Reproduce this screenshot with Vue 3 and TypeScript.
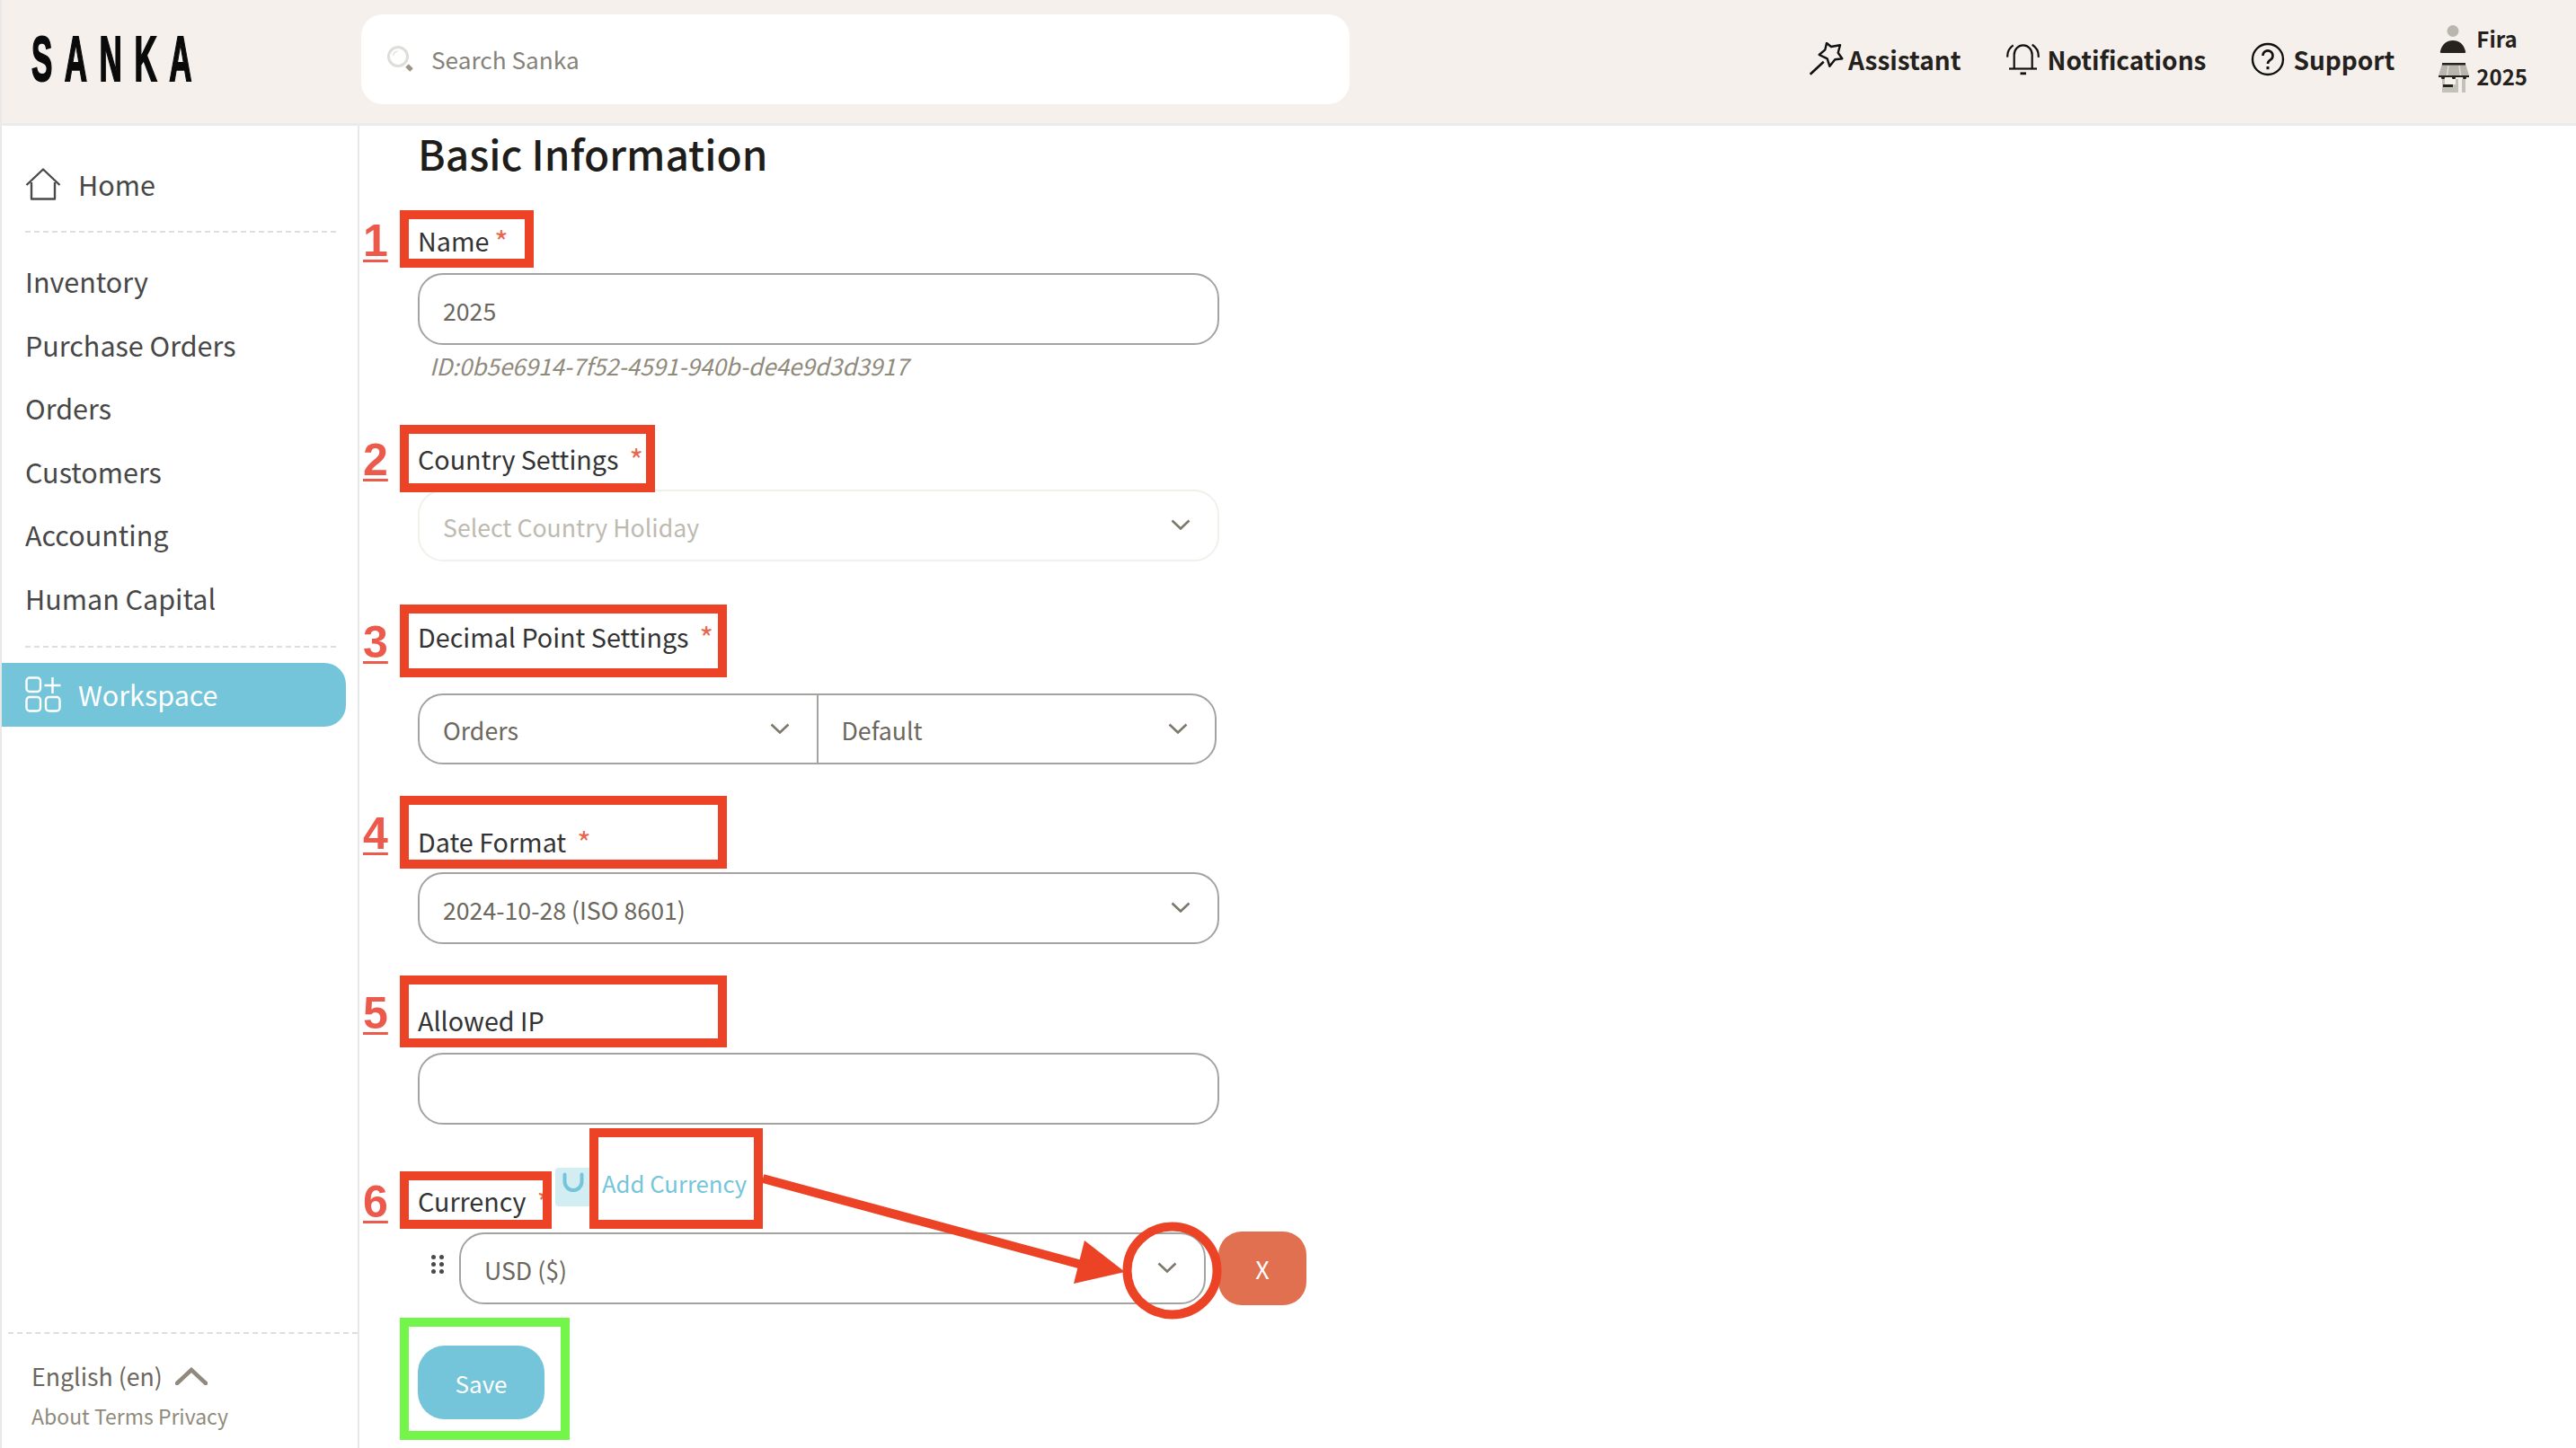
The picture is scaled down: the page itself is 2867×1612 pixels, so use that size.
<script setup lang="ts">
const navItems: string[] = ['Inventory', 'Purchase Orders', 'Orders', 'Customers', 'Accounting', 'Human Capital']
interface Box { n: string; nx: number; ny: number; x: number; y: number; w: number; h: number }
const marks: Box[] = [
  { n: '1', nx: 404, ny: 240, x: 445, y: 234, w: 149, h: 64 },
  { n: '2', nx: 404, ny: 484, x: 445, y: 473, w: 284, h: 75 },
  { n: '3', nx: 404, ny: 687, x: 445, y: 673, w: 364, h: 81 },
  { n: '4', nx: 404, ny: 900, x: 445, y: 886, w: 364, h: 81 },
  { n: '5', nx: 404, ny: 1100, x: 445, y: 1086, w: 364, h: 80 },
  { n: '6', nx: 404, ny: 1310, x: 445, y: 1304, w: 169, h: 64 }
]
function pos(x: number, y: number, w?: number, h?: number) {
  return { left: x + 'px', top: y + 'px', width: w ? w + 'px' : undefined, height: h ? h + 'px' : undefined }
}
</script>

<template>
  <div class="page">
    <header class="topbar">
      <div class="logo-wrap"><div class="logo">SANKA</div></div>
      <div class="search">
        <svg class="search-ico" viewBox="0 0 30 30" width="30" height="30">
          <circle cx="12" cy="12" r="10.500" fill="none" stroke="#dfddd8" stroke-width="3" />
          <path d="M6.500 11a6 6 0 0 1 5-5" fill="none" stroke="#e4e2dd" stroke-width="1.500" />
          <path d="M22 22l5 5" stroke="#9c9587" stroke-width="5" />
        </svg>
        <span>Search Sanka</span>
      </div>
      <nav class="actions">
        <div class="act act-a">
          <svg viewBox="0 0 38 38" width="38" height="38" fill="none" stroke="#111" stroke-width="2.400">
            <path d="M19 1l5 4 10-1.700-2.300 8.400 4.600 6.600-8 1-6 7.400-2.600-8.400-9-4.300 6.600-5.700z" stroke-linejoin="round" />
            <path d="M15.700 21.700L.7 35.700" stroke-width="2.600" />
          </svg>
          <span>Assistant</span>
        </div>
        <div class="act act-n">
          <svg viewBox="0 0 38 38" width="38" height="38" fill="none" stroke="#111" stroke-width="2.200">
            <path d="M9.700 29.500V14a10 10.700 0 0 1 20 0v15.500" />
            <path d="M4 29.500h31" />
            <path d="M16.500 34.800h6.500" stroke-width="2.800" />
            <path d="M8.700 3.300C4 6.500 1.800 11 2.300 16.700M29.700 2.800c5 3.200 7.500 8 7 14" />
          </svg>
          <span>Notifications</span>
        </div>
        <div class="act act-s">
          <svg viewBox="0 0 38 38" width="38" height="38" fill="none" stroke="#111" stroke-width="2.400">
            <circle cx="19" cy="19" r="17" />
            <path d="M13.500 15a5.500 5.500 0 1 1 8.300 4.700c-1.800 1.100-2.800 2-2.800 4.300" stroke-width="2.600" />
            <path d="M19 27v3.200" stroke-width="3" />
          </svg>
          <span>Support</span>
        </div>
        <div class="who">
          <div class="who-row">
            <svg viewBox="0 0 34 33" width="34" height="33">
              <circle cx="16" cy="6.500" r="6.500" fill="#b9b6ae" />
              <path d="M3 31c-1 0-1.500-.8-1-2 2-8 7-12 14-12s12 4 14 12c.5 1.200 0 2-1 2z" fill="#26231f" />
            </svg>
            <span>Fira</span>
          </div>
          <div class="who-row">
            <svg viewBox="0 0 34 33" width="34" height="33">
              <path d="M4 1L0 14h34L30 1z" fill="#b9b6ae" />
              <path d="M11 3L9.500 14M23 3l1.500 11" stroke="#e4e1da" stroke-width="1.500" />
              <path d="M4 0h26v2.500H4zM0 14h34v2H0z" fill="#26231f" />
              <circle cx="5" cy="16.500" r="2" fill="#26231f" />
              <circle cx="17" cy="16.500" r="2" fill="#26231f" />
              <circle cx="29" cy="16.500" r="2" fill="#26231f" />
              <path d="M4 18h18v15H4zM26 18h4v15h-4z" fill="#c4c1b8" />
              <path d="M7 18h12v6H7z" fill="#f5f0eb" />
              <path d="M5 24h11v3H5z" fill="#26231f" />
            </svg>
            <span>2025</span>
          </div>
        </div>
      </nav>
    </header>

    <div class="body">
      <aside class="side">
        <div class="home">
          <svg viewBox="0 0 40 36" width="40" height="36" fill="none" stroke="#4a4a4a" stroke-width="2.400">
            <path d="M1.500 19L20 1.500 38.500 19M7 16v18.500h26V16" stroke-linejoin="round" />
          </svg>
          <span>Home</span>
        </div>
        <div class="dash dash-a"></div>
        <ul class="nav">
          <li v-for="item in navItems" :key="item">{{ item }}</li>
        </ul>
        <div class="dash dash-b"></div>
        <div class="work">
          <svg viewBox="0 0 40 40" width="40" height="40" fill="none" stroke="#fff" stroke-width="2.400">
            <rect x="1.500" y="1.500" width="15.500" height="15.500" rx="3.500" />
            <rect x="1.500" y="23" width="15.500" height="15.500" rx="3.500" />
            <rect x="23" y="23" width="15.500" height="15.500" rx="3.500" />
            <path d="M30.500 1v18M21.500 10h18" />
          </svg>
          <span>Workspace</span>
        </div>
        <div class="side-foot">
          <div class="dash dash-c"></div>
          <div class="lang">
            <span>English (en)</span>
            <svg viewBox="0 0 36 20" width="36" height="20" fill="none" stroke="#8f8a7c" stroke-width="4.500" stroke-linecap="round">
              <path d="M2 18L18 3l16 15" />
            </svg>
          </div>
          <div class="legal">About Terms Privacy</div>
        </div>
      </aside>

      <main class="main">
        <h1>Basic Information</h1>

        <section class="field f-name">
          <label>Name<i class="req">*</i></label>
          <div class="ctl">2025</div>
          <p class="uid">ID:0b5e6914-7f52-4591-940b-de4e9d3d3917</p>
        </section>

        <section class="field f-country">
          <label>Country Settings<i class="req wide">*</i></label>
          <div class="ctl pale">
            <span>Select Country Holiday</span>
            <svg class="chev" viewBox="0 0 22 12" width="22" height="12"><path d="M1.500 1.500L11 10.500l9.500-9" /></svg>
          </div>
        </section>

        <section class="field f-decimal">
          <label>Decimal Point Settings<i class="req wide">*</i></label>
          <div class="pair">
            <div class="cell">
              <span>Orders</span>
              <svg class="chev" viewBox="0 0 22 12" width="22" height="12"><path d="M1.500 1.500L11 10.500l9.500-9" /></svg>
            </div>
            <div class="cell">
              <span>Default</span>
              <svg class="chev" viewBox="0 0 22 12" width="22" height="12"><path d="M1.500 1.500L11 10.500l9.500-9" /></svg>
            </div>
          </div>
        </section>

        <section class="field f-date">
          <label>Date Format<i class="req wide">*</i></label>
          <div class="ctl">
            <span>2024-10-28 (ISO 8601)</span>
            <svg class="chev" viewBox="0 0 22 12" width="22" height="12"><path d="M1.500 1.500L11 10.500l9.500-9" /></svg>
          </div>
        </section>

        <section class="field f-ip">
          <label>Allowed IP</label>
          <div class="ctl"></div>
        </section>

        <section class="field f-cur">
          <label>Currency<i class="req wide">*</i></label>
          <div class="cur-row">
            <span class="grip"><b></b><b></b><b></b><b></b><b></b><b></b></span>
            <div class="ctl cur-ctl">
              <span>USD ($)</span>
              <svg class="chev" viewBox="0 0 22 12" width="22" height="12"><path d="M1.500 1.500L11 10.500l9.500-9" /></svg>
            </div>
            <button class="del" type="button">X</button>
          </div>
        </section>

        <button class="save" type="button">Save</button>
      </main>
    </div>

    <!-- red and green markup drawn over the screenshot -->
    <div class="chip" :style="pos(618, 1300, 40, 43)">
      <svg viewBox="0 0 24 22" width="24" height="22" fill="none" stroke="#74c5d9" stroke-width="4" stroke-linecap="round">
        <path d="M2.500 2.500v8a9.500 9.500 0 0 0 19 0v-8" />
      </svg>
    </div>
    <div class="add-box" :style="pos(656, 1256, 193, 112)"><span>Add Currency</span></div>
    <template v-for="m in marks" :key="m.n">
      <div class="mark" :style="pos(m.x, m.y, m.w, m.h)"></div>
      <div class="num" :style="pos(m.nx, m.ny)">{{ m.n }}</div>
    </template>
    <div class="mark green" :style="pos(445, 1467, 189, 136)"></div>
    <svg class="overlay" width="2867" height="1612" viewBox="0 0 2867 1612">
      <path d="M849 1312L1204 1408" stroke="#ec4226" stroke-width="10" fill="none" />
      <path d="M1252 1416L1207 1381 1195 1429z" fill="#ec4226" />
      <ellipse cx="1304.500" cy="1414.500" rx="50" ry="49" fill="none" stroke="#ec4226" stroke-width="10" />
    </svg>
  </div>
</template>

<style>
html, body { margin: 0; background: #fff; }
</style>

<style scoped>
.page {
  position: relative;
  width: 2867px;
  height: 1612px;
  overflow: hidden;
  background: #fff;
  font-family: "Noto Sans CJK JP", "Noto Sans", sans-serif;
  color: #3a3a3a;
}
.topbar {
  display: flex;
  align-items: center;
  height: 137px;
  box-sizing: border-box;
  background: #f5f0eb;
  border-left: 2px solid #e8e8e8;
}
.logo-wrap { width: 400px; box-sizing: border-box; padding-left: 33px; margin-top: -6px; }
.logo {
  width: max-content;
  font-family: "Liberation Sans", sans-serif;
  font-weight: 700;
  font-size: 70px;
  line-height: 70px;
  letter-spacing: 27px;
  color: #0a0a0a;
  -webkit-text-stroke: 2px #0a0a0a;
  transform: scaleX(0.5);
  transform-origin: left center;
}
.search {
  display: flex;
  align-items: center;
  width: 1100px;
  height: 100px;
  box-sizing: border-box;
  margin-top: -5px;
  padding-left: 29px;
  gap: 19px;
  background: #fff;
  border-radius: 24px;
  font-size: 26.200px;
  color: #85827a;
}
.actions {
  display: flex;
  align-items: center;
  margin-left: auto;
  margin-top: -6px;
  padding-right: 54px;
  color: #24211d;
  font-weight: 700;
  font-size: 28px;
}
.act { display: flex; align-items: center; gap: 5px; }
.act svg { flex: none; }
.act-n { margin-left: 50px; gap: 8px; }
.act-s { margin-left: 50px; gap: 9px; }
.who { margin-left: 49px; font-size: 24px; display: flex; flex-direction: column; gap: 9px; }
.who-row { display: flex; align-items: center; gap: 8px; height: 33px; }
.who-row span { margin-top: -4px; }
.who-row svg { flex: none; }

.body { display: flex; height: 1475px; border-top: 3px solid #ebebeb; box-sizing: border-box; }
.side {
  width: 400px;
  box-sizing: border-box;
  border-left: 2px solid #e8e8e8;
  border-right: 2px solid #e8e8e8;
  display: flex;
  flex-direction: column;
  font-size: 30.500px;
  color: #474747;
}
.home { display: flex; align-items: center; gap: 19px; height: 40px; margin: 45px 0 0 26px; }
.dash { border-top: 2px dashed #dedede; }
.dash-a { margin: 32px 24px 0 26px; }
.nav { list-style: none; margin: 19px 0 0; padding: 0 0 0 26px; }
.nav li { height: 70.600px; line-height: 70.600px; }
.dash-b { margin: 17px 24px 0 26px; }
.work {
  display: flex;
  align-items: center;
  gap: 19px;
  height: 71px;
  width: 383px;
  box-sizing: border-box;
  margin-top: 17px;
  padding-left: 26px;
  background: #74c5d9;
  border-radius: 0 24px 24px 0;
  color: #fff;
}
.side-foot { margin-top: auto; padding-bottom: 18px; }
.dash-c { margin: 0 0 0 7px; }
.lang { display: flex; align-items: center; gap: 14px; margin: 27px 0 0 33px; font-size: 26.700px; color: #6b675e; line-height: 40px; }
.legal { margin: 6px 0 0 33px; font-size: 23px; color: #8f8a7c; line-height: 36px; }

.main { flex: 1; padding-left: 65px; }
h1 { margin: 0; padding: 1px 0 3px; font-size: 46px; line-height: 58px; font-weight: 500; color: #1f1d1a; }
.field label { display: block; height: 40px; line-height: 40px; font-size: 28.700px; color: #333; white-space: nowrap; }
.req { font-style: normal; color: #e9674c; font-size: 33px; line-height: 0; margin-left: 6px; vertical-align: -2px; }
.req.wide { margin-left: 12px; }
.ctl {
  display: flex;
  align-items: center;
  justify-content: space-between;
  width: 892px;
  height: 80px;
  box-sizing: border-box;
  padding: 2px 30px 0 26px;
  border: 2px solid #a3a3a0;
  border-radius: 28px;
  font-size: 26.700px;
  color: #6b675e;
}
.ctl.pale { border-color: #f1f0ea; color: #bdbab0; }
.chev { flex: none; fill: none; stroke: #7d786c; stroke-width: 2.600; margin-top: -4px; }
.uid { margin: 5px 0 0 13px; font-size: 26px; line-height: 36px; font-style: italic; color: #8f8a7c; }
.f-name { margin-top: 46px; }
.f-name label { margin-bottom: 16px; }
.f-country { margin-top: 66px; }
.f-country label { margin-bottom: 14px; }
.f-decimal { margin-top: 64px; }
.f-decimal label { margin-bottom: 43px; }
.f-date { margin-top: 66px; }
.f-date label { margin-bottom: 14px; }
.f-ip { margin-top: 65px; }
.f-ip label { margin-bottom: 16px; }
.f-cur { margin-top: 65px; }
.f-cur label { margin-bottom: 14px; }
.pair {
  display: flex;
  width: 889px;
  height: 79px;
  box-sizing: border-box;
  border: 2px solid #a3a3a0;
  border-radius: 28px;
  font-size: 26.700px;
  color: #6b675e;
}
.cell {
  flex: 1;
  display: flex;
  align-items: center;
  justify-content: space-between;
  padding: 2px 30px 0 26px;
}
.cell + .cell { border-left: 2px solid #a3a3a0; }
.cur-row { display: flex; align-items: center; margin-left: 15px; }
.grip { display: grid; grid-template-columns: 5px 5px; gap: 3px 4px; width: 31px; margin-top: -10px; }
.grip b { width: 5px; height: 5px; border-radius: 50%; background: #4a4a4a; }
.ctl.cur-ctl { width: 831px; }
.del {
  width: 98px;
  height: 82px;
  margin-left: 14px;
  border: 0;
  border-radius: 26px;
  background: #e07050;
  color: #fff;
  font: 400 27px "Noto Sans CJK JP", sans-serif;
}
.save {
  display: block;
  width: 141px;
  height: 82px;
  margin: 45px 0 0;
  border: 0;
  border-radius: 30px;
  background: #74c5d9;
  color: #fff;
  font: 400 26px "Noto Sans CJK JP", sans-serif;
}

.mark {
  position: absolute;
  box-sizing: border-box;
  border: 10px solid #ec4226;
}
.mark.green { border-color: #73f54a; }
.num {
  position: absolute;
  font: 700 50px/56px "Liberation Sans", sans-serif;
  color: #ec5a4c;
  text-decoration: underline;
  text-decoration-thickness: 3px;
  text-underline-offset: 4px;
}
.chip {
  position: absolute;
  box-sizing: border-box;
  padding: 5px 0 0 8px;
  background: #d3eef3;
  border-radius: 4px 0 0 4px;
}
.chip svg { display: block; }
.add-box {
  position: absolute;
  box-sizing: border-box;
  border: 10px solid #ec4226;
  background: #fff;
  color: #74c5d9;
  font-size: 25.700px;
  white-space: nowrap;
  padding: 32px 0 0 4px;
}
.overlay { position: absolute; left: 0; top: 0; pointer-events: none; }
</style>
